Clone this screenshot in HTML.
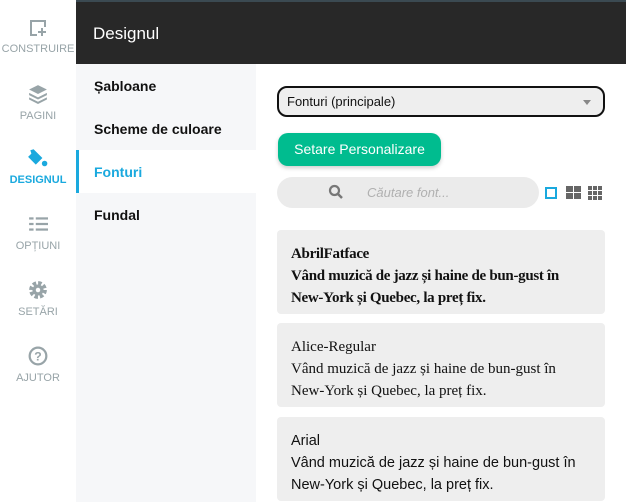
<!DOCTYPE html>
<html><head><meta charset="utf-8"><style>
*{margin:0;padding:0;box-sizing:border-box}
body{width:626px;height:502px;overflow:hidden;font-family:"Liberation Sans",sans-serif;background:#fff;position:relative}
.side{position:absolute;left:0;top:0;width:76px;height:502px;background:#fff}
.it{position:absolute;left:0;width:76px;text-align:center;font-size:11px;color:#98a4a8}
.it svg{display:block;margin:0 auto 6px}
.top{position:absolute;left:76px;top:0;width:550px;height:64px;background:#282828;border-top:2px solid #3b4a52;color:#fff;font-size:17px;padding:22px 0 0 17px}
.sub{position:absolute;left:76px;top:64px;width:180px;height:438px;background:#f6f7f9}
.sub div{height:43px;line-height:44px;padding-left:18px;font-size:14px;font-weight:bold;color:#111}
.sub .act{background:#fff;color:#1aa9de;border-left:3px solid #1aa9de;padding-left:15px}
.sel{position:absolute;left:277px;top:86px;width:328px;height:31px;border:2px solid #111;border-radius:10px;background:#eee;font-size:13px;padding:6px 0 0 8px;color:#111}
.sel:after{content:"";position:absolute;right:12px;top:12px;border:4px solid transparent;border-top:5px solid #888}
.btn{position:absolute;left:278px;top:133px;width:163px;height:33px;background:#00bc8f;border-radius:10px;color:#fff;font-size:14px;text-align:center;line-height:33px;box-shadow:0 2px 4px rgba(0,0,0,.2)}
.search{position:absolute;left:277px;top:177px;width:262px;height:31px;background:#ebebeb;border-radius:16px;color:#b0b0b0;font-style:italic;font-size:13px;line-height:31px;padding-left:90px}
.card{position:absolute;left:277px;width:328px;background:#eee;border-radius:4px;padding:13px 14px;font-size:15px;line-height:22px;color:#111;font-family:"Liberation Serif",serif}
</style></head><body>
<div class="side">
 <div class="it" style="top:19px"><svg width="18" height="18" viewBox="0 0 18 18" fill="none" stroke="#98a4a8" stroke-width="2"><path d="M8 16H2V2h14v6M13 9v8M9 13h8"/></svg>CONSTRUIRE</div>
 <div class="it" style="top:84px"><svg width="20" height="20" viewBox="0 0 18 18" fill="#98a4a8"><path d="M9 1l8 4-8 4-8-4z"/><path d="M1 8l8 4 8-4v2l-8 4-8-4z"/><path d="M1 12l8 4 8-4v2l-8 4-8-4z"/></svg>PAGINI</div>
 <div class="it" style="top:148px;color:#1aa9de;font-weight:bold"><svg width="22" height="20" viewBox="0 0 20 18" fill="#1aa9de"><path d="M3 2l3-1 8 8-6 6-7-7 3-3z"/><circle cx="16" cy="14" r="2.5"/></svg>DESIGNUL</div>
 <div class="it" style="top:214px"><svg width="20" height="20" viewBox="0 0 18 18" fill="#98a4a8"><rect x="7" y="3" width="11" height="2"/><rect x="7" y="8" width="11" height="2"/><rect x="7" y="13" width="11" height="2"/><rect x="1" y="3" width="4" height="2"/><rect x="1" y="8" width="4" height="2"/><rect x="1" y="13" width="4" height="2"/></svg>OPȚIUNI</div>
 <div class="it" style="top:280px"><svg width="20" height="20" viewBox="0 0 18 18"><circle cx="9" cy="9" r="6" fill="none" stroke="#98a4a8" stroke-width="4" stroke-dasharray="3 1.7"/><circle cx="9" cy="9" r="5" fill="#98a4a8"/><circle cx="9" cy="9" r="2" fill="#fff"/></svg>SETĂRI</div>
 <div class="it" style="top:346px"><svg width="20" height="20" viewBox="0 0 18 18"><circle cx="9" cy="9" r="7.5" fill="none" stroke="#98a4a8" stroke-width="2"/><text x="9" y="13" font-size="11" font-weight="bold" text-anchor="middle" fill="#98a4a8" font-family="Liberation Sans">?</text></svg>AJUTOR</div>
</div>
<div class="top">Designul</div>
<div class="sub"><div>Șabloane</div><div>Scheme de culoare</div><div class="act">Fonturi</div><div>Fundal</div></div>
<div class="sel">Fonturi (principale)</div>
<div class="btn">Setare Personalizare</div>
<div class="search">Căutare font...</div>
<svg style="position:absolute;left:328px;top:184px" width="16" height="16" viewBox="0 0 16 16"><circle cx="6.5" cy="6.5" r="4.5" fill="none" stroke="#777" stroke-width="2.2"/><path d="M10 10l4 4" stroke="#777" stroke-width="2.5"/></svg>
<div style="position:absolute;left:545px;top:187px;width:12px;height:12px;border:2px solid #1aa9de"></div>
<svg style="position:absolute;left:566px;top:186px" width="15" height="14"><rect x="0" y="0" width="7" height="6" fill="#666"/><rect x="8" y="0" width="7" height="6" fill="#666"/><rect x="0" y="7" width="7" height="6" fill="#666"/><rect x="8" y="7" width="7" height="6" fill="#666"/></svg>
<svg style="position:absolute;left:588px;top:186px" width="14" height="14" fill="#666"><rect x="0" y="0" width="4" height="4"/><rect x="5" y="0" width="4" height="4"/><rect x="10" y="0" width="4" height="4"/><rect x="0" y="5" width="4" height="4"/><rect x="5" y="5" width="4" height="4"/><rect x="10" y="5" width="4" height="4"/><rect x="0" y="10" width="4" height="4"/><rect x="5" y="10" width="4" height="4"/><rect x="10" y="10" width="4" height="4"/></svg>
<div class="card" style="top:230px;height:84px;font-weight:bold;letter-spacing:-0.3px">AbrilFatface<br>Vând muzică de jazz și haine de bun-gust în New-York și Quebec, la preț fix.</div>
<div class="card" style="top:323px;height:84px">Alice-Regular<br>Vând muzică de jazz și haine de bun-gust în New-York și Quebec, la preț fix.</div>
<div class="card" style="top:417px;height:84px;font-family:'Liberation Sans',sans-serif;font-size:14.5px">Arial<br>Vând muzică de jazz și haine de bun-gust în New-York și Quebec, la preț fix.</div>
</body></html>
